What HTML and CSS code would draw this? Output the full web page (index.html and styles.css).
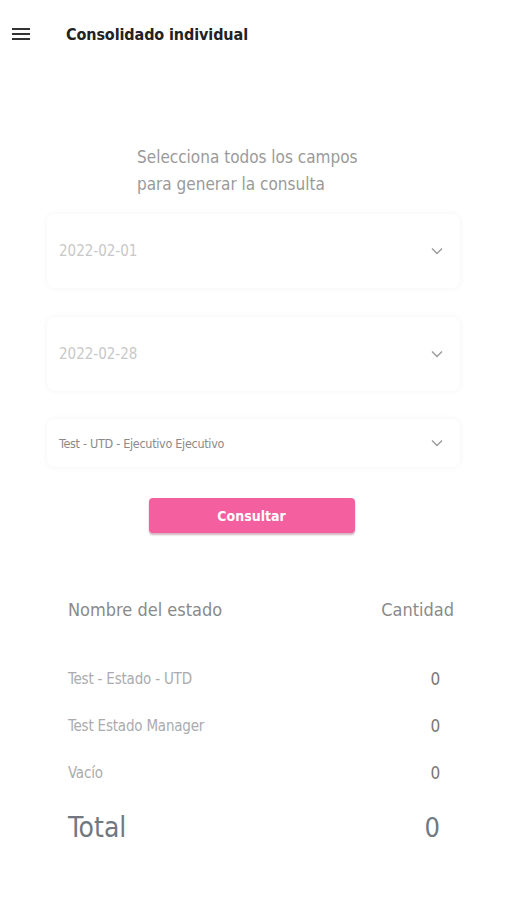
FILE: index.html
```html
<!DOCTYPE html>
<html lang="es">
<head>
<meta charset="utf-8">
<title>Consolidado individual</title>
<link rel="stylesheet" href="styles.css">
</head>
<body>
<header class="topbar">
  <svg class="menu" width="18" height="12" viewBox="0 0 18 12"><rect y="0" width="18" height="2" fill="#333"/><rect y="5" width="18" height="2" fill="#333"/><rect y="10" width="18" height="2" fill="#333"/></svg>
  <h1 class="title">Consolidado individual</h1>
</header>
<main class="content">
  <p class="intro">Selecciona todos los campos<br>para generar la consulta</p>
  <div class="field tall first">
    <span class="value placeholder">2022-02-01</span>
    <svg class="chev" width="12" height="8" viewBox="0 0 12 8"><path d="M1 1.5 6 6.5 11 1.5" fill="none" stroke="#9a9a9a" stroke-width="1.4"/></svg>
  </div>
  <div class="field tall second">
    <span class="value placeholder">2022-02-28</span>
    <svg class="chev" width="12" height="8" viewBox="0 0 12 8"><path d="M1 1.5 6 6.5 11 1.5" fill="none" stroke="#9a9a9a" stroke-width="1.4"/></svg>
  </div>
  <div class="field short">
    <span class="value selected">Test - UTD - Ejecutivo Ejecutivo</span>
    <svg class="chev" width="12" height="8" viewBox="0 0 12 8"><path d="M1 1.5 6 6.5 11 1.5" fill="none" stroke="#9a9a9a" stroke-width="1.4"/></svg>
  </div>
  <div class="actions"><button class="btn">Consultar</button></div>
  <section class="table">
    <div class="thead"><span>Nombre del estado</span><span>Cantidad</span></div>
    <div class="row"><span>Test - Estado - UTD</span><span class="num">0</span></div>
    <div class="row"><span>Test Estado Manager</span><span class="num">0</span></div>
    <div class="row"><span>Vacío</span><span class="num">0</span></div>
    <div class="total"><span>Total</span><span class="num">0</span></div>
  </section>
</main>
</body>
</html>
```
FILE: styles.css
```css
* { box-sizing: border-box; }
body {
  margin: 0;
  background: #fff;
  font-family: "DejaVu Sans Condensed", "DejaVu Sans", sans-serif;
  font-stretch: condensed;
}
.topbar {
  height: 68px;
  display: flex;
  align-items: center;
  padding-left: 12px;
}
.menu { display: block; margin-right: 36px; }
.title {
  margin: 0;
  font-size: 16px;
  font-weight: 600;
  color: #222;
  letter-spacing: -0.1px;
}
.content { padding: 0 46px 0 47px; }
.intro {
  margin: 76px 0 0 90px;
  font-size: 17px;
  line-height: 27px;
  color: #9a9a9a;
}
.field {
  display: flex;
  align-items: center;
  justify-content: space-between;
  padding: 0 17px 0 12px;
  background: #fff;
  border-radius: 8px;
  box-shadow: 0 0 6px rgba(0,0,0,0.05);
}
.field.tall { height: 74px; }
.field.first { margin-top: 16px; }
.field.second { margin-top: 29px; }
.field.short { height: 48px; margin-top: 28px; }
.value { font-size: 15px; }
.placeholder { color: #c8c8c8; }
.selected { color: #8a8a8a; font-size: 12.5px; letter-spacing: -0.3px; }
.chev { display: block; }
.actions { display: flex; justify-content: center; margin-top: 31px; padding-right: 4px; }
.btn {
  width: 206px;
  height: 35px;
  border: 0;
  border-radius: 4px;
  background: #f4609f;
  color: #fff;
  font-family: inherit;
  font-stretch: condensed;
  font-size: 14px;
  font-weight: 700;
  box-shadow: 0 2px 2px rgba(120,40,70,0.35);
}
.table { margin: 58px 6px 0 21px; }
.thead {
  display: flex;
  justify-content: space-between;
  font-size: 18px;
  color: #8a8a8a;
  font-weight: 500;
  height: 36px;
  align-items: center;
  margin-bottom: 28px;
}
.row {
  display: flex;
  justify-content: space-between;
  align-items: center;
  height: 47px;
  font-size: 15px;
  color: #ababab;
  letter-spacing: -0.2px;
}
.row .num { color: #777; font-size: 17px; padding-right: 14px; }
.total {
  display: flex;
  justify-content: space-between;
  align-items: center;
  height: 62px;
  font-size: 28px;
  color: #707880;
}
.total .num { font-size: 27px; padding-right: 14px; }
```
